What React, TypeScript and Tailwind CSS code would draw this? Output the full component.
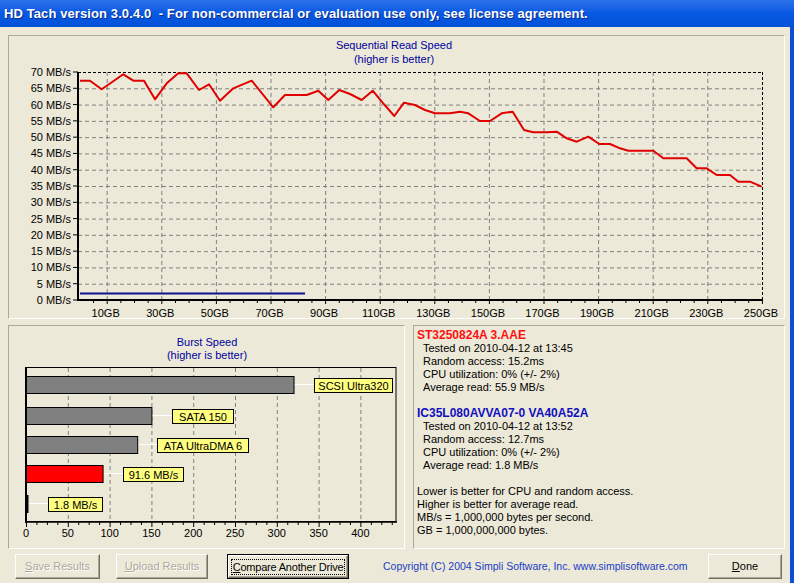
import React from 'react';

// 顺序读取曲线（页面坐标）
const readCurve: [number, number][] = [
  [80, 80.7], [90, 80.7], [101.7, 89.3], [123.3, 74.3], [133.3, 80.7], [144, 80.7],
  [155, 99.3], [166.7, 83.3], [178.3, 73.3], [186.7, 73.3], [199, 90], [209, 84.3],
  [220, 100.7], [233.3, 88.3], [251.7, 80.7], [273.3, 107.3], [285, 95], [306.7, 95],
  [318.3, 90.7], [328.3, 100], [339.3, 90], [350, 94], [361.7, 100], [372.7, 90.7],
  [381.7, 101.7], [394.3, 116], [404, 102.7], [415, 105], [425, 110], [435, 113.3],
  [450, 113.3], [460, 111.7], [468.3, 113.3], [480, 121], [490, 121], [501.7, 113.3],
  [512.7, 111.7], [524, 130], [533.3, 132.3], [546.7, 132.3], [556.7, 131.7],
  [566.7, 138.3], [576.7, 141.7], [588.3, 136.7], [599.3, 144], [610, 144],
  [620, 148.3], [628.3, 150.7], [653.3, 150.7], [663.3, 158.3], [686.7, 158.3],
  [696.7, 168.3], [706.7, 168.3], [716.7, 175], [730, 175], [738.3, 181.7],
  [750, 181.7], [761.7, 186.7],
];

const PX = 78;
const PR = 762;
const PT = 72;
const PB = 300;
const yOf = (v: number) => PB - (v * (PB - PT)) / 70;
const xOf = (gb: number) => 79.4 + gb * 2.73;

function ReadChart() {
  const speeds = Array.from({ length: 15 }, (_, i) => i * 5);
  const gbs = Array.from({ length: 13 }, (_, i) => 10 + i * 20);
  const minor = Array.from({ length: 50 }, (_, i) => i * 5 + 5);
  return (
    <svg width={775} height={282} viewBox="9 36 775 282" className="block font-['Liberation_Sans',Arial,sans-serif]">
      <text x={394} y={49} fontSize={11} fill="#0000a0" textAnchor="middle">Sequential Read Speed</text>
      <text x={394} y={63} fontSize={11} fill="#0000a0" textAnchor="middle">(higher is better)</text>

      {speeds.map((v) => (
        <g key={v}>
          <text x={71} y={yOf(v) + 4} fontSize={11} textAnchor="end" fill="#000">{v} MB/s</text>
          <line x1={73} x2={PX} y1={yOf(v)} y2={yOf(v)} stroke="#000" />
          {v > 0 && v < 70 && (
            <line x1={PX} x2={PR} y1={yOf(v) + 0.5} y2={yOf(v) + 0.5} stroke="#808080" strokeDasharray="4 3" />
          )}
        </g>
      ))}
      {gbs.map((g) =>
        g < 250 ? (
          <line key={g} x1={xOf(g) + 0.5} x2={xOf(g) + 0.5} y1={PT} y2={PB} stroke="#808080" strokeDasharray="4 3" />
        ) : null
      )}
      <line x1={PX} x2={PR} y1={PT + 0.5} y2={PT + 0.5} stroke="#000" strokeDasharray="3 2" />
      <line x1={PR + 0.5} x2={PR + 0.5} y1={PT} y2={PB} stroke="#000" strokeDasharray="3 2" />

      {minor.map((g) => (
        <line key={g} x1={xOf(g) + 0.5} x2={xOf(g) + 0.5} y1={PB} y2={PB + (g % 20 === 10 ? 4 : 3)} stroke="#000" />
      ))}
      {gbs.map((g) => (
        <text key={g} x={xOf(g) - 1} y={317} fontSize={11} textAnchor="middle" fill="#000">{g}GB</text>
      ))}

      <line x1={PX} x2={PX} y1={PT} y2={PB + 1} stroke="#000" strokeWidth={2} />
      <line x1={PX - 1} x2={PR + 1} y1={PB} y2={PB} stroke="#000" strokeWidth={2} />

      <line x1={80} x2={305} y1={293.5} y2={293.5} stroke="#101090" strokeWidth={2} />
      <polyline
        points={readCurve.map(([x, y]) => `${x},${y}`).join(' ')}
        fill="none"
        stroke="#e00000"
        strokeWidth={2}
        strokeLinejoin="round"
      />
    </svg>
  );
}

const BX = 26;
const bxOf = (v: number) => BX + v * 0.836;

const bars = [
  { top: 376, val: 320, color: '#808080', label: 'SCSI Ultra320', lx: 314, lw: 78 },
  { top: 407, val: 150, color: '#808080', label: 'SATA 150', lx: 172, lw: 61 },
  { top: 436, val: 133, color: '#808080', label: 'ATA UltraDMA 6', lx: 157, lw: 91 },
  { top: 465, val: 91.6, color: '#ff0000', label: '91.6 MB/s', lx: 123, lw: 60 },
  { top: 495, val: 1.8, color: '#000000', label: '1.8 MB/s', lx: 48, lw: 54 },
];

function BurstChart() {
  const ticks = Array.from({ length: 9 }, (_, i) => i * 50);
  const minor = Array.from({ length: 36 }, (_, i) => i * 12.5);
  return (
    <svg width={395} height={222} viewBox="9 326 395 222" className="block font-['Liberation_Sans',Arial,sans-serif]">
      <text x={207} y={346} fontSize={11} fill="#0000a0" textAnchor="middle">Burst Speed</text>
      <text x={207} y={359} fontSize={11} fill="#0000a0" textAnchor="middle">(higher is better)</text>

      {ticks.slice(1).map((v) => (
        <line key={v} x1={bxOf(v) + 0.5} x2={bxOf(v) + 0.5} y1={368} y2={521} stroke="#808080" strokeDasharray="4 3" />
      ))}
      <rect x={BX + 0.5} y={367.5} width={396 - BX - 0.5} height={154} fill="none" stroke="#000" />
      <line x1={BX} x2={BX} y1={367} y2={523} stroke="#000" strokeWidth={2} />
      <line x1={BX - 1} x2={397} y1={522} y2={522} stroke="#000" strokeWidth={1.5} />
      {minor.map((v) => (
        <line key={v} x1={bxOf(v) + 0.5} x2={bxOf(v) + 0.5} y1={522} y2={v % 50 === 0 ? 527 : 525} stroke="#000" />
      ))}
      {ticks.map((v) => (
        <text key={v} x={bxOf(v)} y={537} fontSize={11} textAnchor="middle" fill="#000">{v}</text>
      ))}

      {bars.map((b) => {
        const end = bxOf(b.val);
        return (
          <g key={b.label}>
            <line x1={end} x2={b.lx} y1={b.top + 8.5} y2={b.top + 8.5} stroke="#fff" />
            <rect x={BX + 0.5} y={b.top + 0.5} width={Math.max(end - BX, 1.5)} height={17} fill={b.color} stroke="#000" />
            <rect x={b.lx + 0.5} y={b.top + 2.5} width={b.lw} height={14} fill="#ffff80" stroke="#000" />
            <text x={b.lx + b.lw / 2 + 0.5} y={b.top + 13.5} fontSize={11} textAnchor="middle" fill="#000">{b.label}</text>
          </g>
        );
      })}
    </svg>
  );
}

function Panel({ className, children }: { className: string; children?: React.ReactNode }) {
  return (
    <div className={`border border-t-[#aca899] border-l-[#aca899] border-b-white border-r-white ${className}`}>
      {children}
    </div>
  );
}

function Btn({
  width,
  disabled,
  isDefault,
  children,
}: {
  width: string;
  disabled?: boolean;
  isDefault?: boolean;
  children: React.ReactNode;
}) {
  const inner = (
    <div
      className={`h-full w-full flex items-center justify-center whitespace-nowrap border border-t-white border-l-white border-b-[#716f64] border-r-[#716f64] shadow-[inset_-1px_-1px_#aca899] bg-[#ece9d8] text-[11px] ${
        disabled ? 'text-[#aca899] [text-shadow:1px_1px_#ffffff]' : 'text-black'
      }`}
    >
      {isDefault ? (
        <span className="border border-dotted border-black px-[1px] leading-[14px] tracking-[-0.2px]">{children}</span>
      ) : (
        children
      )}
    </div>
  );
  if (isDefault) {
    return <div className={`${width} h-[25px] border border-black`}>{inner}</div>;
  }
  return <div className={`${width} h-[25px]`}>{inner}</div>;
}

export default function App() {
  return (
    <div className="w-[794px] h-[583px] flex flex-col bg-[#ece9d8] overflow-hidden font-['Liberation_Sans',Arial,sans-serif] text-black">
      {/* 标题栏 */}
      <div className="h-[27px] shrink-0 bg-gradient-to-b from-[#2b71e9] via-[#0758e2] to-[#0352d9] flex items-center pl-[4px] pt-[1px]">
        <span className="text-white font-bold text-[13px] whitespace-pre tracking-[0.1px] [text-shadow:1px_1px_#0b2a8a]">
          HD Tach version 3.0.4.0  - For non-commercial or evaluation use only, see license agreement.
        </span>
      </div>

      <div className="flex flex-1">
        <div className="flex-1 flex flex-col pl-[8px] pt-[8px]">
          <Panel className="w-[777px] h-[284px]">
            <ReadChart />
          </Panel>

          <div className="flex mt-[6px] gap-[8px] h-[224px]">
            <Panel className="w-[397px] h-full">
              <BurstChart />
            </Panel>
            <Panel className="w-[372px] h-full pl-[3px] pt-[2px] text-[11px] leading-[13px]">
              <div className="text-[12px] font-bold text-[#ff1010] leading-[14px]">ST3250824A 3.AAE</div>
              <div className="pl-[6px]">
                <div>Tested on 2010-04-12 at 13:45</div>
                <div>Random access: 15.2ms</div>
                <div>CPU utilization: 0% (+/- 2%)</div>
                <div>Average read: 55.9 MB/s</div>
              </div>
              <div className="text-[12px] font-bold text-[#1010c0] leading-[14px] mt-[12px]">IC35L080AVVA07-0 VA40A52A</div>
              <div className="pl-[6px]">
                <div>Tested on 2010-04-12 at 13:52</div>
                <div>Random access: 12.7ms</div>
                <div>CPU utilization: 0% (+/- 2%)</div>
                <div>Average read: 1.8 MB/s</div>
              </div>
              <div className="mt-[13px]">
                <div>Lower is better for CPU and random access.</div>
                <div>Higher is better for average read.</div>
                <div>MB/s = 1,000,000 bytes per second.</div>
                <div>GB = 1,000,000,000 bytes.</div>
              </div>
            </Panel>
          </div>

          <div className="flex items-center mt-[5px] pl-[7px] pr-[8px]">
            <Btn width="w-[85px]" disabled>
              <span><span className="underline">S</span>ave Results</span>
            </Btn>
            <div className="ml-[16px]">
              <Btn width="w-[92px]" disabled>
                <span><span className="underline">U</span>pload Results</span>
              </Btn>
            </div>
            <div className="ml-[19px]">
              <Btn width="w-[122px]" isDefault>
                <span><span className="underline">C</span>ompare Another Drive</span>
              </Btn>
            </div>
            <span className="ml-[34px] text-[10.5px] text-[#1a3cc8] whitespace-nowrap">
              Copyright (C) 2004 Simpli Software, Inc. www.simplisoftware.com
            </span>
            <div className="ml-auto">
              <Btn width="w-[74px]">
                <span><span className="underline">D</span>one</span>
              </Btn>
            </div>
          </div>
        </div>
        <div className="w-[4px] bg-[#0a4fd6]" />
      </div>
    </div>
  );
}
